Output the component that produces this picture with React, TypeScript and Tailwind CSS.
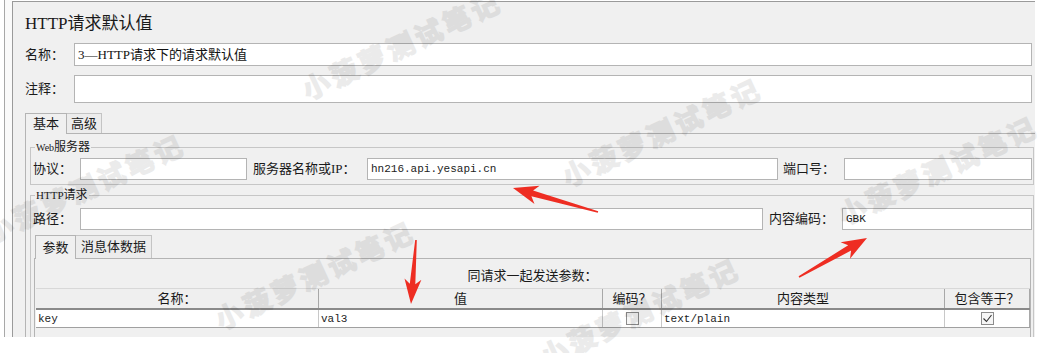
import React from "react";

const lbl =
  "font-['Liberation_Serif','Noto_Sans_CJK_SC',serif] text-[13px] leading-[16px] text-[#1a1a1a] whitespace-nowrap";
const mono =
  "font-['Liberation_Mono','Noto_Sans_CJK_SC',monospace] text-[11px] leading-[14px] text-[#222]";
const inputCls = "h-[22px] bg-white border border-[#b4b4b4] flex items-center px-[3px]";

type P = [number, number];

function arrowPoints(tail: P, tip: P, headLen: number, headHalf: number, tailW: number, neckW: number) {
  const dx = tip[0] - tail[0];
  const dy = tip[1] - tail[1];
  const len = Math.hypot(dx, dy);
  const ux = dx / len;
  const uy = dy / len;
  const nx = -uy;
  const ny = ux;
  const bx = tip[0] - ux * headLen;
  const by = tip[1] - uy * headLen;
  const nkx = tip[0] - ux * (headLen - 5);
  const nky = tip[1] - uy * (headLen - 5);
  const pts: P[] = [
    [tail[0] + nx * tailW, tail[1] + ny * tailW],
    [nkx + nx * neckW, nky + ny * neckW],
    [bx + nx * headHalf, by + ny * headHalf],
    tip,
    [bx - nx * headHalf, by - ny * headHalf],
    [nkx - nx * neckW, nky - ny * neckW],
    [tail[0] - nx * tailW, tail[1] - ny * tailW],
  ];
  return pts.map((p) => `${p[0].toFixed(1)},${p[1].toFixed(1)}`).join(" ");
}

function Watermark({ x, y }: { x: number; y: number }) {
  return (
    <div
      className="absolute pointer-events-none whitespace-nowrap -translate-x-1/2 -translate-y-1/2 rotate-[-25deg] font-['Noto_Sans_CJK_SC',sans-serif] font-bold text-[27px] tracking-[4px] text-black opacity-[0.075] [-webkit-text-stroke:1.6px_black]"
      style={{ left: x, top: y }}
    >
      小菠萝测试笔记
    </div>
  );
}

function CheckBox({ checked }: { checked?: boolean }) {
  return (
    <div className="w-[13px] h-[13px] border border-[#8c8c8c] bg-[#f6f6f6] flex items-center justify-center">
      {checked && (
        <svg width="11" height="11" viewBox="0 0 11 11">
          <polyline points="1.5,5.5 4.5,8.5 9.5,2" fill="none" stroke="#333" strokeWidth="1.1" />
        </svg>
      )}
    </div>
  );
}

export default function App() {
  return (
    <div className="relative w-[1063px] h-[353px] bg-white overflow-hidden">
      <div className="flex h-[337px]">
        <div className="w-[4px] shrink-0" />
        <div className="w-[8px] shrink-0 border-l border-[#a8a8a8] bg-[#fafafa]" />
        <div className="w-[1023px] shrink-0 mt-[1px] border-l border-t border-[#9a9a9a] bg-[#f0f0f0] flex flex-col pl-[12px]">
          {/* Title */}
          <div className="mt-[12px] h-[20px] leading-[20px] text-[17px] text-[#1a1a1a] font-['Liberation_Serif','Noto_Sans_CJK_SC',serif] whitespace-nowrap">
            HTTP请求默认值
          </div>

          {/* 名称 */}
          <div className="mt-[9px] flex items-center h-[23px]">
            <div className={`w-[49px] ${lbl}`}>名称：</div>
            <div className="flex-1 mr-[3px] h-[23px] bg-white border border-[#b4b4b4] flex items-center px-[3px]">
              <span className="font-['Liberation_Serif','Noto_Sans_CJK_SC',serif] text-[13px] leading-[16px] text-[#111]">
                3—HTTP请求下的请求默认值
              </span>
            </div>
          </div>

          {/* 注释 */}
          <div className="mt-[9px] flex items-center h-[28px]">
            <div className={`w-[49px] ${lbl}`}>注释：</div>
            <div className="flex-1 mr-[3px] h-[28px] bg-white border border-[#b4b4b4]" />
          </div>

          {/* Tabs */}
          <div className="mt-[10px] h-[20px] flex items-end">
            <div className={`relative z-10 -mb-px h-[21px] w-[42px] border-l border-t border-r border-[#b4b4b4] bg-[#f0f0f0] flex items-center justify-center ${lbl}`}>
              基本
            </div>
            <div className={`h-[20px] w-[35px] border-t border-r border-[#c4c4c4] bg-[#ececec] flex items-center justify-center ${lbl}`}>
              高级
            </div>
          </div>

          {/* Tab pane */}
          <div className="flex-1 border-l border-t border-[#b4b4b4] flex flex-col pl-[4px]">
            {/* Web服务器 */}
            <fieldset className="mt-[6px] mr-[1px] border border-[#c6c6c6] pb-[4px] min-w-0">
              <legend className="ml-[4px] px-[1px] h-[14px] leading-[14px] text-[12px] text-[#1a1a1a] font-['Liberation_Serif','Noto_Sans_CJK_SC',serif]">
                <span className="text-[10px]">Web</span>服务器
              </legend>
              <div className="mt-[4px] flex items-center h-[22px] pl-[2px] pr-[1px]">
                <div className={`w-[47px] ${lbl}`}>协议：</div>
                <div className={`w-[167px] ${inputCls}`} />
                <div className={`w-[120px] pl-[6px] ${lbl}`}>服务器名称或IP：</div>
                <div className={`w-[411px] ${inputCls}`}>
                  <span className={mono}>hn216.api.yesapi.cn</span>
                </div>
                <div className={`w-[66px] pl-[5px] ${lbl}`}>端口号：</div>
                <div className={`flex-1 ${inputCls}`} />
              </div>
            </fieldset>

            {/* HTTP请求 */}
            <fieldset className="mt-[3px] mr-[1px] flex-1 border border-b-0 border-[#c6c6c6] min-w-0 flex flex-col">
              <legend className="ml-[4px] px-[1px] h-[14px] leading-[14px] text-[12px] text-[#1a1a1a] font-['Liberation_Serif','Noto_Sans_CJK_SC',serif]">
                <span className="text-[11px]">HTTP</span>请求
              </legend>
              <div className="mt-[6px] flex items-center h-[22px] pl-[2px] pr-[1px]">
                <div className={`w-[47px] ${lbl}`}>路径：</div>
                <div className={`w-[683px] ${inputCls}`} />
                <div className={`w-[79px] pl-[6px] ${lbl}`}>内容编码：</div>
                <div className={`flex-1 ${inputCls}`}>
                  <span className={mono}>GBK</span>
                </div>
              </div>

              {/* sub tabs */}
              <div className="mt-[5px] ml-[4px] h-[23px] flex items-end">
                <div className={`relative z-10 -mb-px h-[24px] w-[41px] border-l border-t border-r border-[#b4b4b4] bg-[#f0f0f0] flex items-center justify-center ${lbl}`}>
                  参数
                </div>
                <div className={`h-[23px] w-[76px] border-t border-r border-[#c4c4c4] bg-[#ececec] flex items-center justify-center ${lbl}`}>
                  消息体数据
                </div>
              </div>

              {/* sub pane */}
              <div className="flex-1 ml-[3px] mr-[2px] border-l border-t border-r border-[#b4b4b4] flex flex-col">
                <div className={`mt-[9px] h-[14px] leading-[14px] text-center ${lbl}`}>同请求一起发送参数：</div>
                <div className="mt-[6px] ml-[1px] flex flex-col">
                  <div className="flex h-[22px] bg-[#efefef] border-t border-[#d8d8d8] border-b-2 border-b-[#8a8a8a]">
                    <div className={`w-[283px] border-r border-[#a8a8a8] flex items-center justify-center ${lbl}`}>名称：</div>
                    <div className={`w-[284px] border-r border-[#a8a8a8] flex items-center justify-center ${lbl}`}>值</div>
                    <div className={`w-[59px] border-r border-[#a8a8a8] flex items-center justify-center ${lbl}`}>编码？</div>
                    <div className={`w-[283px] border-r border-[#a8a8a8] flex items-center justify-center ${lbl}`}>内容类型</div>
                    <div className={`flex-1 border-r border-[#a8a8a8] flex items-center justify-center ${lbl}`}>包含等于？</div>
                  </div>
                  <div className="flex h-[18px] bg-white border-b border-[#a0a0a0]">
                    <div className="w-[283px] border-r border-[#c8c8c8] flex items-center pl-[2px]">
                      <span className={mono}>key</span>
                    </div>
                    <div className="w-[284px] border-r border-[#c8c8c8] flex items-center pl-[2px]">
                      <span className={mono}>val3</span>
                    </div>
                    <div className="w-[59px] border-r border-[#c8c8c8] flex items-center justify-center">
                      <CheckBox />
                    </div>
                    <div className="w-[283px] border-r border-[#c8c8c8] flex items-center pl-[2px]">
                      <span className={mono}>text/plain</span>
                    </div>
                    <div className="flex-1 border-r border-[#a8a8a8] flex items-center justify-center">
                      <CheckBox checked />
                    </div>
                  </div>
                </div>
              </div>
            </fieldset>
          </div>
        </div>
      </div>

      {/* watermarks */}
      <Watermark x={402} y={45} />
      <Watermark x={662} y={132} />
      <Watermark x={85} y={188} />
      <Watermark x={938} y={170} />
      <Watermark x={315} y={275} />
      <Watermark x={640} y={312} />

      {/* red arrows */}
      <svg className="absolute left-0 top-0 pointer-events-none" width="1063" height="353">
        <polygon points={arrowPoints([598, 212], [513, 188], 25, 9.5, 0.8, 3)} fill="#ee2d22" />
        <polygon points={arrowPoints([416, 240], [411, 304], 25, 8.5, 0.8, 2.8)} fill="#ee2d22" />
        <polygon points={arrowPoints([799, 277], [867, 238], 25, 9.5, 0.8, 3)} fill="#ee2d22" />
      </svg>
    </div>
  );
}
